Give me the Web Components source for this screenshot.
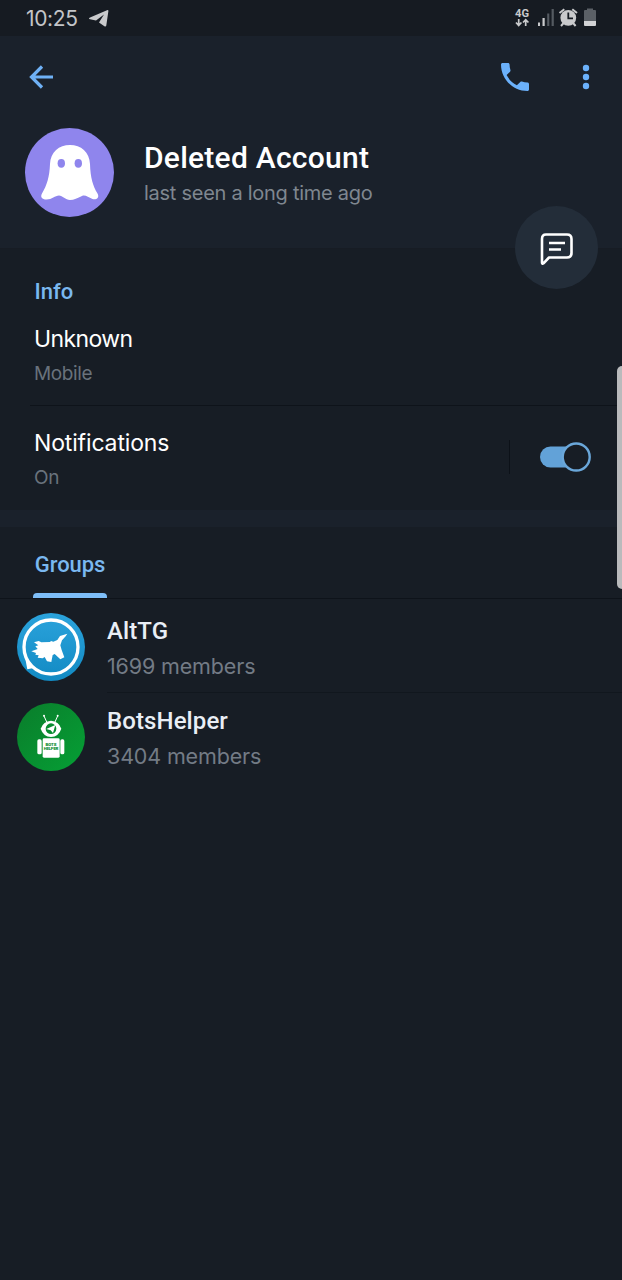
<!DOCTYPE html>
<html lang="en">
<head>
<meta charset="utf-8">
<title>Profile</title>
<style>
  body {
    margin: 0;
    background: #171d25;
    font-family: Inter, Roboto, sans-serif;
    color: #fff;
  }
</style>
</head>
<body>
<uc-profile-page>
  <uc-status-bar slot="top" time="10:25"></uc-status-bar>
  <uc-profile-header slot="top" name="Deleted Account" status="last seen a long time ago"></uc-profile-header>

  <uc-section heading="Info">
    <uc-info-row label="Unknown" value="Mobile" style="--top: 17px; --height: 98px; --spacing: -0.6px"></uc-info-row>
    <uc-info-row label="Notifications" value="On" last style="--top: 22px; --height: 104px">
      <uc-switch></uc-switch>
    </uc-info-row>
  </uc-section>

  <uc-tabs>Groups</uc-tabs>

  <uc-group-row name="AltTG" members="1699 members">
    <svg viewBox="51 39 204 204" width="68" height="68">
      <defs>
        <linearGradient id="sky" x1="0" y1="0" x2="0" y2="1">
          <stop offset="0" stop-color="#2ba3dc"/>
          <stop offset="1" stop-color="#128ac3"/>
        </linearGradient>
      </defs>
      <circle cx="153" cy="141" r="102" fill="url(#sky)"/>
      <circle cx="153" cy="141" r="81" fill="none" stroke="#fff" stroke-width="10"/>
      <path d="M75 172L82 208L101 204Z" fill="#fff"/>
      <path d="M102 127L116 123L124 127L150 126L153 123L160 125L172 120L180 108L202 101L197 109L186 121L181 136L185 150L193 172L181 178L164 162L158 165L154 186L141 184L134 171L128 175L113 173L116 166L106 164L108 159L94 154L113 147L106 139L115 136Z" fill="#fff"/>
    </svg>
  </uc-group-row>
  <uc-group-row name="BotsHelper" members="3404 members" last>
    <svg viewBox="51 39 204 204" width="68" height="68">
      <defs>
        <linearGradient id="leaf" x1="0" y1="0" x2="1" y2="1">
          <stop offset="0" stop-color="#0a7c2b"/>
          <stop offset="1" stop-color="#05a035"/>
        </linearGradient>
      </defs>
      <circle cx="153" cy="141" r="102" fill="url(#leaf)"/>
      <path d="M132 78L141 98M173 78L164 98" stroke="#fff" stroke-width="3"/>
      <circle cx="132" cy="77" r="3" fill="#fff"/>
      <circle cx="173" cy="77" r="3" fill="#fff"/>
      <path d="M122 116Q130 93 153 92Q176 93 184 116Q176 140 153 141Q130 140 122 116Z" fill="#fff"/>
      <circle cx="153" cy="116" r="16" fill="#078b2f"/>
      <path d="M139 117L166 105L159 129L152 121Z" fill="#fff"/>
      <rect x="128" y="145" width="51" height="58" rx="4" fill="#fff"/>
      <rect x="112" y="148" width="13" height="45" rx="5" fill="#fff"/>
      <rect x="181" y="148" width="12" height="45" rx="5" fill="#fff"/>
      <g font-family="Roboto, sans-serif" font-weight="900" font-size="13" fill="#078b2f" text-anchor="middle">
        <text x="153" y="167">BOTS</text>
        <text x="153" y="181" letter-spacing="-0.8">HELPER</text>
      </g>
    </svg>
  </uc-group-row>
</uc-profile-page>

<script>
class ProfilePage extends HTMLElement {
  constructor() {
    super()
    this.attachShadow({ mode: 'open' })
    this.shadowRoot.innerHTML = `
      <style>
        :host {
          display: flex;
          flex-direction: column;
          position: relative;
          height: 1280px;
          overflow: hidden;
        }
        .handle {
          position: absolute;
          top: 366px;
          right: 0;
          width: 5.5px;
          height: 223px;
          border-radius: 6px 0 0 6px;
          background: #b9babc;
        }
      </style>
      <slot name="top"></slot>
      <slot></slot>
      <div class="handle"></div>
    `
  }
}

class StatusBar extends HTMLElement {
  constructor() {
    super()
    this.attachShadow({ mode: 'open' })
    this.shadowRoot.innerHTML = `
      <style>
        :host {
          display: flex;
          align-items: center;
          height: 36px;
          padding: 0 25px 0 26px;
          box-sizing: border-box;
          background: #161b22;
          color: #c3c5c8;
        }
        .time {
          padding-top: 2px;
          font-size: 21px;
          line-height: 36px;
          letter-spacing: -0.35px;
          width: 63px;
        }
        .right {
          margin-left: auto;
        }
        svg {
          display: block;
        }
      </style>
      <span class="time"></span>
      <svg width="20" height="18" viewBox="0 0 20 18">
        <path d="M0 9.500Q0 8.800 1 8.400L18 1.200Q19.500 0.800 19.400 2L17.300 16.500Q16.900 18.200 15.400 17.300L10 13.500L15 5.500L7 11.500L1 10.200Q0 10 0 9.500Z" fill="#c9cacc"/>
      </svg>
      <svg class="right" width="83" height="36" viewBox="514 0 83 36">
        <text x="515" y="17" font-family="Roboto, sans-serif" font-weight="700" font-size="10.500" fill="#c9cacc" textLength="14" lengthAdjust="spacingAndGlyphs">4G</text>
        <path d="M518.700 19V25M516 22.500L518.700 25.500L521.400 22.500M525.700 26V20M523 22.500L525.700 19.700L528.400 22.500" fill="none" stroke="#c9cacc" stroke-width="1.700"/>
        <path d="M538 22.500H540V26H538ZM542.500 18H544.700V26H542.500Z" fill="#c9cacc"/>
        <path d="M547.200 13.500H549.300V26H547.200ZM551.600 9H553.800V26H551.600Z" fill="#545a61"/>
        <circle cx="568.300" cy="17.800" r="7.900" fill="#c9cacc"/>
        <path d="M559.500 13L564.300 9.300M577 13L572.300 9.300M561 26L564 22.500M575.600 26L572.600 22.500" stroke="#c9cacc" stroke-width="2"/>
        <path d="M568.300 12.500V18.300H573" fill="none" stroke="#161b22" stroke-width="1.800"/>
        <path d="M584 11Q584 10 585 10H587V8.500H593V10H595Q596 10 596 11V21H584Z" fill="#5b6066"/>
        <path d="M584 21H596V25Q596 26 595 26H585Q584 26 584 25Z" fill="#d2d3d5"/>
      </svg>
    `
  }

  connectedCallback() {
    this.shadowRoot.querySelector('.time').textContent = this.getAttribute('time')
  }
}

class ProfileHeader extends HTMLElement {
  constructor() {
    super()
    this.attachShadow({ mode: 'open' })
    this.shadowRoot.innerHTML = `
      <style>
        :host {
          display: block;
          position: relative;
          height: 213px;
          background: #1a212b;
          border-bottom: 1px solid #171c24;
          box-sizing: border-box;
        }
        .bar {
          display: flex;
          align-items: center;
          height: 82px;
          padding: 0 32px 0 28px;
        }
        .bar svg:nth-child(2) {
          margin-left: auto;
          margin-right: 53px;
        }
        .person {
          display: flex;
          padding: 10px 0 0 25px;
          gap: 30px;
        }
        .text {
          padding-top: 11px;
        }
        h1 {
          margin: 0;
          font: 500 30px/38px Roboto, sans-serif;
          letter-spacing: 0.25px;
          white-space: nowrap;
        }
        p {
          margin: 0;
          font-size: 20px;
          line-height: 32px;
          letter-spacing: -0.270px;
          color: #7f8790;
          white-space: nowrap;
        }
        svg {
          display: block;
        }
        .fab {
          position: absolute;
          z-index: 1;
          left: 515px;
          top: 170px;
          width: 83px;
          height: 83px;
          border-radius: 50%;
          background: #232d39;
        }
      </style>
      <div class="bar">
        <svg width="26" height="26" viewBox="0 0 26 26" fill="none" stroke="#6fb1f5" stroke-width="3.200">
          <path d="M25 13H4M14 2.500L3.500 13L14 23.500"/>
        </svg>
        <svg width="28" height="28" viewBox="3 3 18 18" fill="#6bb1fb">
          <path d="M6.620 10.790c1.440 2.830 3.760 5.140 6.590 6.590l2.200-2.200c.27-.27.67-.36 1.020-.24 1.120.37 2.330.57 3.570.57.55 0 1 .45 1 1V20c0 .55-.45 1-1 1-9.390 0-17-7.610-17-17 0-.55.45-1 1-1h3.500c.55 0 1 .45 1 1 0 1.250.2 2.450.57 3.570.11.35.03.74-.25 1.020l-2.200 2.200z"/>
        </svg>
        <svg width="8" height="26" viewBox="0 0 8 26" fill="#6bb1fb">
          <circle cx="4" cy="4" r="3.200"/><circle cx="4" cy="13" r="3.200"/><circle cx="4" cy="22" r="3.200"/>
        </svg>
      </div>
      <div class="person">
        <svg width="89" height="89" viewBox="0 0 89 89">
          <circle cx="44.500" cy="44.500" r="44.500" fill="#8f85ed"/>
          <path d="M45 17C56 17 64.500 24 65 36C65.400 50 68 58 72.500 65.500C75 70 71 72 67.500 71C63 69.500 60.500 66.500 57 68C52.500 70 49 72 45 72C40.500 72 37.500 67.500 34 67.500C30 67.500 27 71.500 21.500 71.500C17 71.500 15 69 17 65.500C22 57 24.500 49 25 36C25.500 24 34 17 45 17Z" fill="#fff"/>
          <ellipse cx="36.300" cy="35.300" rx="3.700" ry="4.400" fill="#8f85ed"/>
          <ellipse cx="53.300" cy="35.300" rx="3.700" ry="4.400" fill="#8f85ed"/>
        </svg>
        <div class="text">
          <h1></h1>
          <p></p>
        </div>
      </div>
      <div class="fab">
        <svg width="83" height="83" viewBox="0 0 83 83" fill="none" stroke="#fff" stroke-width="2.600" stroke-linejoin="round">
          <path d="M31 28.500H52Q56.500 28.500 56.500 33V47Q56.500 51.500 52 51.500H34L28.500 57.300Q27 58.500 27 56.500V33Q27 28.500 31 28.500Z"/>
          <path d="M34 37H50M34 43.500H46" stroke-width="2.400"/>
        </svg>
      </div>
    `
  }

  connectedCallback() {
    this.shadowRoot.querySelector('h1').textContent = this.getAttribute('name')
    this.shadowRoot.querySelector('p').textContent = this.getAttribute('status')
  }
}

class Section extends HTMLElement {
  constructor() {
    super()
    this.attachShadow({ mode: 'open' })
    this.shadowRoot.innerHTML = `
      <style>
        :host {
          display: block;
          padding-top: 28px;
          border-bottom: 17px solid #1a212b;
        }
        h2 {
          margin: 0 0 0 34.500px;
          font: 500 22px/30px Roboto, sans-serif;
          color: #7ab8f0;
        }
      </style>
      <h2></h2>
      <slot></slot>
    `
  }

  connectedCallback() {
    this.shadowRoot.querySelector('h2').textContent = this.getAttribute('heading')
  }
}

class InfoRow extends HTMLElement {
  constructor() {
    super()
    this.attachShadow({ mode: 'open' })
    this.shadowRoot.innerHTML = `
      <style>
        :host {
          display: flex;
          justify-content: space-between;
          height: calc(var(--height) - var(--top));
          margin-left: 30px;
          padding: var(--top) 31px 0 4px;
          border-bottom: 1px solid #0e131a;
        }
        :host([last]) {
          border-bottom: 0;
        }
        .label {
          font-size: 23px;
          line-height: 30px;
          letter-spacing: var(--spacing, -0.15px);
        }
        .value {
          margin-top: 8px;
          font-size: 19px;
          line-height: 24px;
          letter-spacing: -0.4px;
          color: #69727c;
        }
      </style>
      <div>
        <div class="label"></div>
        <div class="value"></div>
      </div>
      <slot></slot>
    `
  }

  connectedCallback() {
    this.shadowRoot.querySelector('.label').textContent = this.getAttribute('label')
    this.shadowRoot.querySelector('.value').textContent = this.getAttribute('value')
  }
}

class Switch extends HTMLElement {
  constructor() {
    super()
    this.attachShadow({ mode: 'open' })
    this.shadowRoot.innerHTML = `
      <style>
        :host {
          display: flex;
          align-items: center;
          height: 34px;
          margin-top: 12px;
          padding-left: 30px;
          border-left: 1px solid #0c1118;
        }
        svg {
          display: block;
        }
      </style>
      <svg width="51" height="30" viewBox="0 0 51 30">
        <rect x="0" y="4.500" width="44" height="21" rx="10.500" fill="#62a2d8"/>
        <circle cx="36.200" cy="15" r="13.500" fill="#171d25" stroke="#6aa7da" stroke-width="2.400"/>
      </svg>
    `
  }
}

class Tabs extends HTMLElement {
  constructor() {
    super()
    this.attachShadow({ mode: 'open' })
    this.shadowRoot.innerHTML = `
      <style>
        :host {
          display: flex;
          height: 72px;
          margin-bottom: 4px;
          padding-left: 33px;
          box-sizing: border-box;
          border-bottom: 1px solid #0e131a;
        }
        .tab {
          display: flex;
          flex-direction: column;
          justify-content: space-between;
          width: 74px;
          padding-top: 23px;
          text-align: center;
          font: 500 22px/30px Roboto, sans-serif;
          letter-spacing: -0.1px;
          color: #7ab8f0;
        }
        .line {
          height: 5px;
          border-radius: 4px 4px 0 0;
          background: #7dbdf7;
        }
      </style>
      <div class="tab">
        <slot></slot>
        <div class="line"></div>
      </div>
    `
  }
}

class GroupRow extends HTMLElement {
  constructor() {
    super()
    this.attachShadow({ mode: 'open' })
    this.shadowRoot.innerHTML = `
      <style>
        :host {
          display: flex;
          height: 90px;
          gap: 22px;
          padding-left: 17px;
        }
        .avatar {
          padding-top: 10px;
        }
        .text {
          flex: 1;
          padding-top: 13px;
          border-bottom: 1px solid #11171e;
          box-sizing: border-box;
        }
        :host([last]) .text {
          border-bottom: 0;
        }
        .name {
          font: 500 24px/30px Roboto, sans-serif;
          letter-spacing: 0.1px;
          color: #e9eef5;
        }
        .members {
          margin-top: 4.500px;
          font-size: 21.500px;
          line-height: 30px;
          letter-spacing: -0.150px;
          color: #737b85;
        }
        ::slotted(svg) {
          display: block;
        }
      </style>
      <div class="avatar"><slot></slot></div>
      <div class="text">
        <div class="name"></div>
        <div class="members"></div>
      </div>
    `
  }

  connectedCallback() {
    this.shadowRoot.querySelector('.name').textContent = this.getAttribute('name')
    this.shadowRoot.querySelector('.members').textContent = this.getAttribute('members')
  }
}

customElements.define('uc-profile-page', ProfilePage)
customElements.define('uc-status-bar', StatusBar)
customElements.define('uc-profile-header', ProfileHeader)
customElements.define('uc-section', Section)
customElements.define('uc-info-row', InfoRow)
customElements.define('uc-switch', Switch)
customElements.define('uc-tabs', Tabs)
customElements.define('uc-group-row', GroupRow)
</script>
</body>
</html>
